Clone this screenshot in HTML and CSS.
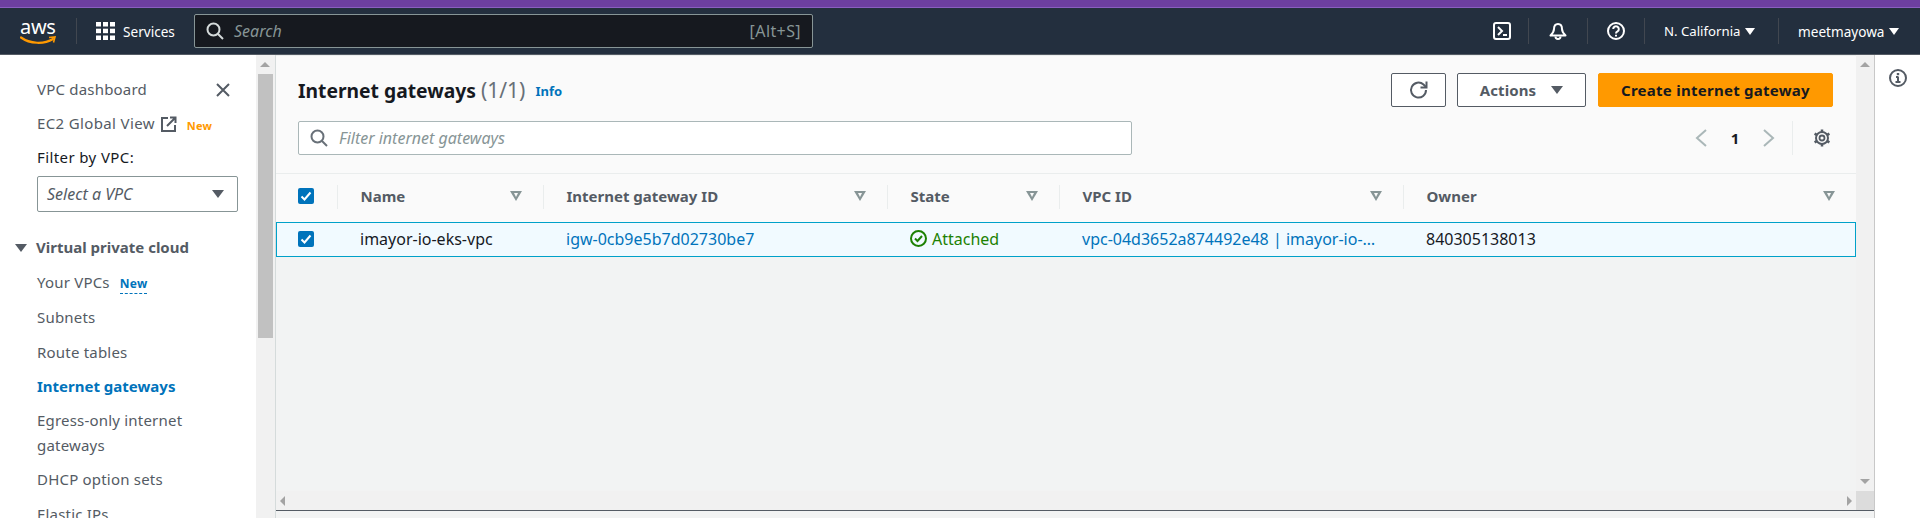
FILE: index.html
```html
<!DOCTYPE html>
<html lang="en">
  <head>
    <meta charset="UTF-8" />
    <meta name="viewport" content="width=device-width, initial-scale=1.0" />
    <title>Internet gateways</title>
    <link rel="stylesheet" href="styles.css">
  </head>
  <body>
    <div class="top-strip"></div>
    <header class="navbar">
      <div class="logo">
        <span class="logo-text">aws</span>
        <svg class="logo-smile" width="36" height="9" viewBox="0 0 36 9">
          <path d="M1 1.5C10 8 24 8.5 33 3" fill="none" stroke="#f90" stroke-width="2.2" stroke-linecap="round" />
          <path d="M29 1.5L35 1L33.5 6.5" fill="none" stroke="#f90" stroke-width="1.6" />
        </svg>
      </div>
      <div class="services">
        <svg width="19" height="18" viewBox="0 0 19 18" fill="#fff">
          <rect x="0" y="0" width="5" height="4.5" /><rect x="7" y="0" width="5" height="4.5" /><rect x="14" y="0" width="5" height="4.5" />
          <rect x="0" y="6.7" width="5" height="4.5" /><rect x="7" y="6.7" width="5" height="4.5" /><rect x="14" y="6.7" width="5" height="4.5" />
          <rect x="0" y="13.5" width="5" height="4.5" /><rect x="7" y="13.5" width="5" height="4.5" /><rect x="14" y="13.5" width="5" height="4.5" />
        </svg>
        <span>Services</span>
      </div>
      <div class="search">
        <svg width="18" height="18" viewBox="0 0 18 18" fill="none" stroke="#d5dbdb" stroke-width="2">
          <circle cx="7.5" cy="7.5" r="6" /><path d="M12 12l5 5" />
        </svg>
        <span class="search-text">Search</span>
        <span class="search-key">[Alt+S]</span>
      </div>
      <div class="nav-right">
        <div class="nav-icon nav-icon-first">
          <svg width="18" height="18" viewBox="0 0 18 18" fill="none" stroke="#fff" stroke-width="2">
            <rect x="1" y="1" width="16" height="16" rx="2" /><path d="M5 5l4 4-4 4" /><path d="M10 13h4" />
          </svg>
        </div>
        <div class="nav-icon">
          <svg width="18" height="18" viewBox="0 0 18 18" fill="none" stroke="#fff" stroke-width="2">
            <path d="M9 2C6 2 5 4.500 5 7c0 3-1.500 4.500-3.500 6.500h15C14.500 11.500 13 10 13 7c0-2.500-1-5-4-5z" stroke-linejoin="round" /><path d="M6.500 14.500a2.500 2.500 0 0 0 5 0" />
          </svg>
        </div>
        <div class="nav-icon nav-icon-help">
          <svg width="18" height="18" viewBox="0 0 18 18" fill="none" stroke="#fff" stroke-width="2">
            <circle cx="9" cy="9" r="8" /><path d="M6.200 7a2.800 2.800 0 1 1 4.300 2.400c-1 .6-1.500 1-1.500 2.100" /><path d="M9 12.700v1.800" />
          </svg>
        </div>
        <div class="nav-menu region">N. California <i class="caret-white"></i></div>
        <div class="nav-menu account">meetmayowa <i class="caret-white"></i></div>
      </div>
    </header>

    <div class="layout">
      <aside class="sidebar">
        <div class="side-row">
          <a class="side-link">VPC dashboard</a>
          <svg class="side-close" width="16" height="16" viewBox="0 0 16 16" fill="none" stroke="#545b64" stroke-width="2">
            <path d="M2 2l12 12M14 2L2 14" />
          </svg>
        </div>
        <div class="side-row">
          <a class="side-link side-link-wide">EC2 Global View</a>
          <svg class="side-external" width="16" height="16" viewBox="0 0 16 16" fill="none" stroke="#545b64" stroke-width="2">
            <path d="M7 2H1v13h13V9" /><path d="M6 10l8-8M9 1.500h5.500V7" />
          </svg>
          <span class="badge-orange">New</span>
        </div>
        <div class="side-label">Filter by VPC:</div>
        <div class="vpc-select">
          <span>Select a VPC</span>
          <i class="caret-dark"></i>
        </div>
        <div class="side-section"><i class="caret-dark"></i>Virtual private cloud</div>
        <ul class="side-list">
          <li>Your VPCs <span class="badge-blue">New</span></li>
          <li>Subnets</li>
          <li>Route tables</li>
          <li class="active">Internet gateways</li>
          <li>Egress-only internet gateways</li>
          <li>DHCP option sets</li>
          <li>Elastic IPs</li>
        </ul>
      </aside>

      <div class="side-scroll">
        <i class="arrow-up"></i>
        <div class="side-thumb"></div>
      </div>

      <main class="main">
        <div class="main-body">
          <section class="pane">
            <div class="pane-head">
              <div class="title-row">
                <h1>Internet gateways <span class="count">(1/1)</span></h1>
                <a class="info">Info</a>
                <div class="actions">
                  <button class="btn btn-refresh">
                    <svg width="20" height="20" viewBox="0 0 20 20" fill="none" stroke="#545b64" stroke-width="2">
                      <path d="M17 10a7.500 7.500 0 1 1-2.500-5.500L17 7" /><path d="M17.500 1.500V7.500H11.500" />
                    </svg>
                  </button>
                  <button class="btn btn-actions">Actions <i class="caret-dark"></i></button>
                  <button class="btn btn-primary">Create internet gateway</button>
                </div>
              </div>
              <div class="filter-row">
                <div class="filter">
                  <svg width="18" height="18" viewBox="0 0 18 18" fill="none" stroke="#687078" stroke-width="2">
                    <circle cx="7.500" cy="7.500" r="6" /><path d="M12 12l5 5" />
                  </svg>
                  <span>Filter internet gateways</span>
                </div>
                <div class="pager">
                  <svg width="12" height="18" viewBox="0 0 12 18" fill="none" stroke="#aab7b8" stroke-width="2"><path d="M11 1L2 9l9 8" /></svg>
                  <span class="page-num">1</span>
                  <svg width="12" height="18" viewBox="0 0 12 18" fill="none" stroke="#aab7b8" stroke-width="2"><path d="M1 1l9 8-9 8" /></svg>
                  <div class="pager-sep">
                    <svg width="18" height="18" viewBox="0 0 18 18" fill="none" stroke="#545b64">
                      <circle cx="9" cy="9" r="2.500" stroke-width="1.800" />
                      <circle cx="9" cy="9" r="6" stroke-width="2" />
                      <path d="M9 .5v3M9 14.500v3M1.600 4.700l2.600 1.500M13.800 11.800l2.600 1.500M1.600 13.300l2.600-1.500M13.800 6.200l2.600-1.500" stroke-width="2.500" />
                    </svg>
                  </div>
                </div>
              </div>
            </div>

            <div class="table-row table-head">
              <div class="cell"><span class="check"><svg width="16" height="16" viewBox="0 0 16 16" fill="none" stroke="#fff" stroke-width="2"><path d="M3.500 8.500l3 3 6-7" /></svg></span></div>
              <div class="cell">Name <i class="sort"></i></div>
              <div class="cell">Internet gateway ID <i class="sort"></i></div>
              <div class="cell">State <i class="sort"></i></div>
              <div class="cell">VPC ID <i class="sort"></i></div>
              <div class="cell cell-last">Owner <i class="sort"></i></div>
            </div>
            <div class="table-row table-selected">
              <div class="cell"><span class="check"><svg width="16" height="16" viewBox="0 0 16 16" fill="none" stroke="#fff" stroke-width="2"><path d="M3.500 8.500l3 3 6-7" /></svg></span></div>
              <div class="cell">imayor-io-eks-vpc</div>
              <div class="cell"><a>igw-0cb9e5b7d02730be7</a></div>
              <div class="cell status">
                <svg width="17" height="17" viewBox="0 0 17 17" fill="none" stroke="#1d8102" stroke-width="2"><circle cx="8.500" cy="8.500" r="7.500" /><path d="M5 8.500l2.500 2.500 4.500-5" /></svg>
                Attached
              </div>
              <div class="cell"><a>vpc-04d3652a874492e48 | imayor-io-…</a></div>
              <div class="cell">840305138013</div>
            </div>
            <div class="pane-empty"></div>
            <div class="h-scroll">
              <i class="arrow-left"></i>
              <i class="arrow-right"></i>
            </div>
          </section>
          <div class="v-scroll">
            <i class="arrow-up"></i>
            <i class="arrow-down"></i>
            <div class="v-corner"></div>
          </div>
        </div>
        <div class="main-foot"></div>
      </main>

      <aside class="tools">
        <svg width="18" height="18" viewBox="0 0 18 18" fill="none" stroke="#545b64" stroke-width="2">
          <circle cx="9" cy="9" r="8" /><path d="M9 7.500v5.500M6.500 13h5M7 8h2" /><path d="M9 4v2.200" stroke-width="2.400" />
        </svg>
      </aside>
    </div>
  </body>
</html>
```

FILE: styles.css
```css
* {
  margin: 0;
  padding: 0;
  box-sizing: border-box;
}

body {
  font-family: "Noto Sans", "Open Sans", sans-serif;
  font-size: 14px;
  color: #16191f;
  background: #fff;
  display: flex;
  flex-direction: column;
  height: 100vh;
  overflow: hidden;
}

i {
  display: inline-block;
  flex: none;
}

a {
  color: #0073bb;
}

.top-strip {
  height: 8px;
  background: #6d3fa0;
  border-bottom: 1px solid #8a5fc0;
}

/* top nav */
.navbar {
  height: 47px;
  background: #232f3e;
  border-bottom: 1px solid #545b64;
  display: flex;
  align-items: center;
  color: #fff;
  font-size: 13.6px;
  padding-left: 20px;
}

.logo {
  width: 57px;
  height: 26px;
  border-right: 1px solid #414750;
  flex: none;
}

.logo-text {
  display: block;
  font-size: 20px;
  line-height: 18px;
  letter-spacing: -0.3px;
}

.logo-smile {
  display: block;
}

.services {
  display: flex;
  align-items: center;
  gap: 8px;
  margin-left: 19px;
  width: 98px;
  flex: none;
}

.search {
  width: 619px;
  height: 34px;
  background: #16191f;
  border: 1px solid #879596;
  border-radius: 2px;
  display: flex;
  align-items: center;
  padding: 0 11px;
  flex: none;
}

.search-text {
  margin-left: 10px;
  font-style: italic;
  font-size: 16px;
  color: #879596;
}

.search-key {
  margin-left: auto;
  color: #879596;
  font-size: 16px;
  letter-spacing: 0.4px;
}

.nav-right {
  margin-left: auto;
  display: flex;
  align-items: center;
  height: 26px;
}

.nav-icon {
  width: 59px;
  height: 26px;
  display: flex;
  align-items: center;
  justify-content: center;
  border-right: 1px solid #414750;
}

.nav-icon-first {
  width: 54px;
}

.nav-icon-help {
  width: 57px;
}

.nav-menu {
  height: 26px;
  display: flex;
  align-items: center;
  gap: 5px;
  white-space: nowrap;
}

.region {
  width: 134px;
  padding-left: 19px;
  border-right: 1px solid #414750;
  font-size: 13.2px;
}

.account {
  width: 141px;
  padding-left: 19px;
}

.caret-white {
  width: 0;
  height: 0;
  border-left: 5px solid transparent;
  border-right: 5px solid transparent;
  border-top: 7px solid #fff;
}

.caret-dark {
  width: 0;
  height: 0;
  border-left: 6px solid transparent;
  border-right: 6px solid transparent;
  border-top: 8px solid #545b64;
}

/* page */
.layout {
  flex: 1;
  display: flex;
  min-height: 0;
}

.sidebar {
  width: 256px;
  flex: none;
  padding: 22px 25px 0 37px;
  color: #545b64;
  font-size: 15px;
  line-height: 25px;
  letter-spacing: 0.2px;
  overflow: hidden;
}

.side-row {
  display: flex;
  align-items: center;
  height: 25px;
  margin-bottom: 9px;
}

.side-link {
  color: #545b64;
}

.side-link-wide {
  letter-spacing: 0.36px;
}

.side-close {
  margin-left: auto;
}

.side-external {
  margin-left: 6px;
}

.badge-orange {
  color: #ff9900;
  font-size: 11px;
  font-weight: 700;
  margin: 3px 0 0 10px;
}

.side-label {
  color: #16191f;
  height: 25px;
  margin-bottom: 6px;
  letter-spacing: 0.4px;
}

.vpc-select {
  width: 201px;
  height: 36px;
  border: 1px solid #879596;
  border-radius: 2px;
  display: flex;
  align-items: center;
  justify-content: space-between;
  padding: 0 13px 0 9px;
  font-style: italic;
  font-size: 16px;
  letter-spacing: 0;
}

.side-section {
  font-weight: 700;
  letter-spacing: 0;
  margin: 23px 0 0 -22px;
  display: flex;
  align-items: center;
  gap: 9px;
}

.side-list {
  list-style: none;
  margin-top: 10px;
}

.side-list li {
  padding-bottom: 9.3px;
  width: 180px;
}

.side-list .active {
  color: #0073bb;
  font-weight: 700;
  letter-spacing: 0;
}

.badge-blue {
  color: #0073bb;
  font-size: 12px;
  font-weight: 700;
  margin-left: 6px;
  border-bottom: 1px dashed #0073bb;
  padding-bottom: 1px;
}

.side-scroll {
  width: 20px;
  flex: none;
  background: #f1f1f1;
  border-right: 1px solid #d5dbdb;
  padding-left: 2px;
  position: relative;
}

.side-thumb {
  width: 15px;
  height: 264px;
  margin-top: 19px;
  background: #c1c1c1;
}

.arrow-up,
.arrow-down {
  position: absolute;
  width: 0;
  height: 0;
  border-left: 5px solid transparent;
  border-right: 5px solid transparent;
}

.arrow-up {
  top: 7px;
  left: 4px;
  border-bottom: 5px solid #a3a3a3;
}

.arrow-down {
  left: 4px;
  bottom: 26px;
  border-top: 5px solid #a3a3a3;
}

.main {
  flex: 1;
  min-width: 0;
  display: flex;
  flex-direction: column;
  border-right: 1px solid #c8c8c8;
}

.main-body {
  flex: 1;
  display: flex;
  min-height: 0;
}

.main-foot {
  height: 8px;
  background: #f2f3f3;
  border-top: 1px solid #545b64;
}

.pane {
  flex: 1;
  min-width: 0;
  display: flex;
  flex-direction: column;
  background: #f2f3f3;
}

.pane-head {
  background: #fafafa;
  border-top: 1px solid #eaeded;
  border-bottom: 1px solid #eaeded;
  padding: 17px 23px 18px 22px;
  height: 119px;
}

.title-row {
  display: flex;
  align-items: center;
  height: 34px;
}

h1 {
  font-size: 19.3px;
  font-weight: 700;
  color: #16191f;
}

.count {
  font-size: 21px;
  font-weight: 400;
  color: #687078;
}

.info {
  font-size: 13px;
  font-weight: 700;
  margin: 2px 0 0 10px;
}

.actions {
  margin-left: auto;
  display: flex;
  gap: 11px;
}

.btn {
  height: 34px;
  border: 1px solid #545b64;
  border-radius: 2px;
  background: #fff;
  color: #545b64;
  font: 700 15px "Noto Sans", "Open Sans", sans-serif;
  display: flex;
  align-items: center;
  justify-content: center;
}

.btn-refresh {
  width: 55px;
}

.btn-actions {
  width: 129px;
  gap: 15px;
  letter-spacing: 0.1px;
}

.btn-primary {
  width: 235px;
  margin-left: 1px;
  background: #ff9900;
  border-color: #ff9900;
  color: #16191f;
  letter-spacing: 0.26px;
}

.filter-row {
  display: flex;
  align-items: center;
  margin-top: 14px;
}

.filter {
  width: 834px;
  height: 34px;
  background: #fff;
  border: 1px solid #aab7b8;
  border-radius: 2px;
  display: flex;
  align-items: center;
  padding-left: 11px;
  gap: 11px;
  font-style: italic;
  font-size: 16px;
  color: #879596;
}

.pager {
  margin-left: auto;
  display: flex;
  align-items: center;
}

.page-num {
  width: 56px;
  text-align: center;
  font-weight: 700;
  font-size: 15px;
  color: #16191f;
}

.pager-sep {
  margin-left: 17px;
  width: 41px;
  height: 34px;
  border-left: 1px solid #eaeded;
  display: flex;
  align-items: center;
  justify-content: flex-end;
  padding-right: 2px;
}

/* table */
.table-row {
  display: grid;
  grid-template-columns: 62px 206px 344px 172px 344px 1fr;
}

.table-head {
  height: 48px;
  background: #fafafa;
  color: #545b64;
  font-weight: 700;
  font-size: 15px;
}

.table-head .cell {
  border-right: 1px solid #eaeded;
  height: 24px;
  margin-top: 11px;
  padding: 0 21px 2px 22.5px;
  display: flex;
  align-items: center;
  justify-content: space-between;
}

.table-head .cell:first-child {
  padding-left: 22px;
}

.table-head .cell-last {
  border-right: none;
}

.table-selected {
  height: 35px;
  background: #f1faff;
  border: 1px solid #00a1c9;
  font-size: 16px;
}

.table-selected .cell {
  display: flex;
  align-items: center;
  padding: 0 0 2px 21px;
  white-space: nowrap;
}

.check {
  width: 16px;
  height: 16px;
  background: #0073bb;
  border-radius: 2px;
  display: block;
}

.check svg {
  display: block;
}

.sort {
  width: 0;
  height: 0;
  border-left: 6px solid transparent;
  border-right: 6px solid transparent;
  border-top: 10px solid #879596;
  position: relative;
}

.sort::after {
  content: "";
  position: absolute;
  left: -2px;
  top: -8px;
  border-left: 2px solid transparent;
  border-right: 2px solid transparent;
  border-top: 4px solid #fafafa;
}

.status {
  color: #1d8102;
  gap: 5px;
}

.pane-empty {
  flex: 1;
}

.h-scroll {
  height: 19px;
  background: #f1f1f1;
  display: flex;
  align-items: center;
  justify-content: space-between;
  padding: 0 4px;
}

.arrow-left,
.arrow-right {
  width: 0;
  height: 0;
  border-top: 5px solid transparent;
  border-bottom: 5px solid transparent;
}

.arrow-left {
  border-right: 5px solid #a3a3a3;
}

.arrow-right {
  border-left: 5px solid #a3a3a3;
}

.v-scroll {
  width: 18px;
  flex: none;
  background: #f1f1f1;
  position: relative;
}

.v-corner {
  position: absolute;
  left: 0;
  right: 0;
  bottom: 0;
  height: 19px;
  background: #dcdcdc;
}

.tools {
  width: 45px;
  flex: none;
  padding: 14px 0 0 14px;
}
```
